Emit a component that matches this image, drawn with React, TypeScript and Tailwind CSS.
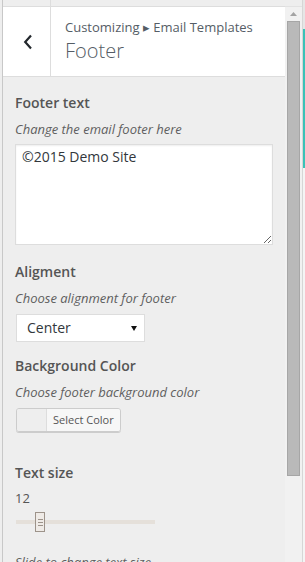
import React from 'react';

function Label({ children, className = '' }: { children: React.ReactNode; className?: string }) {
    return <div className={`text-[14px] leading-[20px] font-semibold text-[#555] ${className}`}>{children}</div>;
}

function Description({ children, className = '' }: { children: React.ReactNode; className?: string }) {
    return <div className={`text-[13px] leading-[18px] italic text-[#5f5f5f] ${className}`}>{children}</div>;
}

export default function App() {
    return (
        <div className="flex h-[562px] w-[305px] overflow-hidden bg-[#eee] font-['Open_Sans',sans-serif]">
            <div className="w-[3px] shrink-0 border-r border-[#c8c8c8]" />

            {/* customizer panel */}
            <div className="flex w-[282px] shrink-0 flex-col">
                <div className="flex h-[7px] shrink-0 border-b border-[#ddd]">
                    <div className="w-[48px] border-r border-[#ddd]" />
                </div>
                <div className="flex h-[70px] shrink-0 border-b border-[#ddd] bg-white">
                    <div className="flex w-[48px] items-center justify-center border-r border-[#ddd] pl-[2px]">
                        <svg width="10" height="16" viewBox="0 0 10 16" fill="none">
                            <path d="M8 1.5 L2.2 8 L8 14.5" stroke="#23282d" strokeWidth="2.2" />
                        </svg>
                    </div>
                    <div className="pl-[14px] pt-[10px] text-[#555d66]">
                        <div className="text-[13px] leading-[20px]">Customizing ▸ Email Templates</div>
                        <div className="text-[20px] leading-[27px] font-light">Footer</div>
                    </div>
                </div>

                <div className="px-[12px] pt-[16px]">
                    <Label>Footer text</Label>
                    <Description className="mt-[7px]">Change the email footer here</Description>
                    <textarea
                        defaultValue="©2015 Demo Site"
                        className="mt-[6px] block h-[101px] w-[258px] border border-[#ddd] bg-white px-[6px] py-[2px] text-[14px] leading-[20px] text-[#32373c] shadow-[inset_0_1px_2px_rgba(0,0,0,0.07)] outline-none"
                    />

                    <Label className="mt-[17px]">Aligment</Label>
                    <Description className="mt-[7px]">Choose alignment for footer</Description>
                    <div className="mt-[7px] ml-px flex h-[28px] w-[129px] items-center justify-between border border-[#ddd] bg-white pl-[10px] pr-[7px] text-[14px] leading-[20px] text-[#32373c]">
                        <span>Center</span>
                        <svg width="6" height="5" viewBox="0 0 6 5">
                            <path d="M0 0 H6 L3 5 Z" fill="#111" />
                        </svg>
                    </div>

                    <Label className="mt-[14px]">Background Color</Label>
                    <Description className="mt-[7px]">Choose footer background color</Description>
                    <div className="mt-[7px] ml-px flex h-[24px] w-[105px] overflow-hidden rounded-[3px] border border-[#ccc] shadow-[0_1px_0_#ccc]">
                        <div className="w-[30px] border-r border-[#ddd] bg-[#eee]" />
                        <div className="flex-1 bg-[#f7f7f7] pl-[6px] text-[11px] leading-[22px] text-[#555]">Select Color</div>
                    </div>

                    <Label className="mt-[31px]">Text size</Label>
                    <div className="mt-[6px] text-[13px] leading-[18px] text-[#555]">12</div>
                    <div className="relative mt-[5px] ml-px h-[20px] w-[139px]">
                        <div className="absolute left-0 right-0 top-[8px] h-[4px] bg-[#e5e0da]" />
                        <div className="absolute left-[19px] top-0 flex h-[20px] w-[10px] flex-col items-center justify-center gap-[2px] border border-[#9d938a] bg-[#efebe7]">
                            <div className="h-px w-[5px] bg-[#9d938a]" />
                            <div className="h-px w-[5px] bg-[#9d938a]" />
                            <div className="h-px w-[5px] bg-[#9d938a]" />
                        </div>
                    </div>
                    <Description className="mt-[21px]">Slide to change text size</Description>
                </div>
            </div>

            {/* scrollbar */}
            <div className="flex w-[17px] shrink-0 flex-col">
                <div className="h-[7px] shrink-0 border-b border-[#e2e2e2]" />
                <div className="flex flex-1 flex-col items-center bg-[#f1f1f1]">
                    <svg className="mt-[5px]" width="7" height="4" viewBox="0 0 7 4">
                        <path d="M3.5 0 L7 4 H0 Z" fill="#a3a3a3" />
                    </svg>
                    <div className="mt-[5px] h-[455px] w-[13px] border border-[#a6a6a6] bg-[#b9b9b9]" />
                </div>
            </div>
            <div className="w-px shrink-0 bg-[#d6d6d6]" />
            <div className="w-[2px] shrink-0 bg-[#f4f4f4]">
                <div className="h-[29px] bg-[#e6e6e6]" />
                <div className="h-[139px] bg-[#3bc2b7]" />
            </div>
        </div>
    );
}
